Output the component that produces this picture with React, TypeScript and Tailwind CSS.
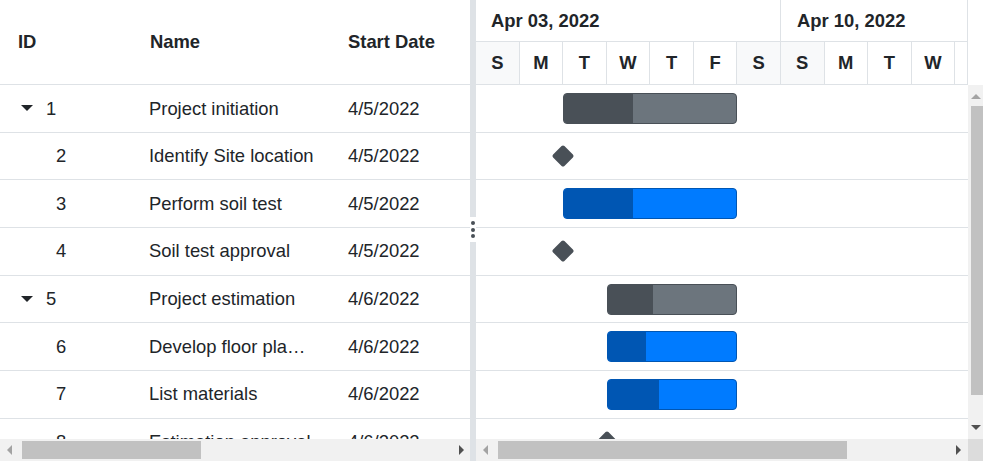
import type { ReactNode } from "react";

type Task = {
  id: number;
  name: string;
  start: string;
  parent?: boolean;
  kind: "parent" | "task" | "milestone";
  from: number;
  span?: number;
  progress?: number;
};

const DAY = 43.57;

const tasks: Task[] = [
  { id: 1, name: "Project initiation", start: "4/5/2022", parent: true, kind: "parent", from: 2, span: 4, progress: 40 },
  { id: 2, name: "Identify Site location", start: "4/5/2022", kind: "milestone", from: 2 },
  { id: 3, name: "Perform soil test", start: "4/5/2022", kind: "task", from: 2, span: 4, progress: 40 },
  { id: 4, name: "Soil test approval", start: "4/5/2022", kind: "milestone", from: 2 },
  { id: 5, name: "Project estimation", start: "4/6/2022", parent: true, kind: "parent", from: 3, span: 3, progress: 35 },
  { id: 6, name: "Develop floor plan for estimation", start: "4/6/2022", kind: "task", from: 3, span: 3, progress: 30 },
  { id: 7, name: "List materials", start: "4/6/2022", kind: "task", from: 3, span: 3, progress: 40 },
  { id: 8, name: "Estimation approval", start: "4/6/2022", kind: "milestone", from: 3 },
];

const days = ["S", "M", "T", "W", "T", "F", "S", "S", "M", "T", "W", "T"];

function ExpandArrow() {
  return <span className="inline-block h-0 w-0 border-x-[6.5px] border-t-[6px] border-x-transparent border-t-[#212529]" />;
}

function TaskBar({ task }: { task: Task }) {
  if (task.kind === "milestone") {
    return (
      <div
        className="absolute top-1/2 h-[16px] w-[16px] -translate-x-1/2 -translate-y-1/2 rotate-45 rounded-[2px] bg-[#495057]"
        style={{ left: task.from * DAY }}
      />
    );
  }

  const isParent = task.kind === "parent";
  const width = (task.span ?? 1) * DAY;

  return (
    <div
      className={`absolute top-[8px] flex h-[31px] overflow-hidden rounded-[4px] border ${
        isParent ? "border-[#495057] bg-[#6c757d]" : "border-[#0056b3] bg-[#007bff]"
      }`}
      style={{ left: task.from * DAY, width }}
    >
      <div
        className={isParent ? "h-full bg-[#495057]" : "h-full bg-[#0056b3]"}
        style={{ width: `${task.progress ?? 0}%` }}
      />
    </div>
  );
}

function HScrollbar({ thumbLeft, thumbWidth, children }: { thumbLeft: number; thumbWidth: number; children?: ReactNode }) {
  return (
    <div className="relative h-[22px] shrink-0 bg-[#f1f1f1]">
      <span className="absolute left-[7px] top-[6px] h-0 w-0 border-y-[5px] border-r-[5px] border-y-transparent border-r-[#a3a3a3]" />
      <div className="absolute top-[2px] h-[18px] bg-[#c1c1c1]" style={{ left: thumbLeft, width: thumbWidth }} />
      {children}
    </div>
  );
}

export default function App() {
  return (
    <div className="flex h-[461px] w-[983px] overflow-hidden bg-white font-['Liberation_Sans',Arial,sans-serif] text-[18.4px] text-[#212529]">
      {/* grid pane */}
      <div className="flex w-[470px] shrink-0 flex-col overflow-hidden">
        <div className="flex h-[85px] shrink-0 items-center border-b border-[#dee2e6] font-bold">
          <div className="w-[132px] shrink-0 pl-[18px]">ID</div>
          <div className="w-[198px] shrink-0 pl-[18px]">Name</div>
          <div className="w-[160px] shrink-0 pl-[18px]">Start Date</div>
        </div>
        <div className="h-[354px] shrink-0 overflow-hidden">
          {tasks.map((task) => (
            <div key={task.id} className="flex h-[47.67px] items-center border-b border-[#dee2e6]">
              <div className="flex w-[132px] shrink-0 items-center">
                {task.parent ? (
                  <div className="flex items-center pl-[21px]">
                    <ExpandArrow />
                    <span className="ml-[13px]">{task.id}</span>
                  </div>
                ) : (
                  <span className="pl-[56px]">{task.id}</span>
                )}
              </div>
              <div className="w-[198px] shrink-0 truncate pl-[17px] pr-[15px]">{task.name}</div>
              <div className="w-[160px] shrink-0 pl-[18px]">{task.start}</div>
            </div>
          ))}
        </div>
        <HScrollbar thumbLeft={22} thumbWidth={179}>
          <span className="absolute left-[459px] top-[6px] h-0 w-0 border-y-[5px] border-l-[5px] border-y-transparent border-l-[#505050]" />
        </HScrollbar>
      </div>

      {/* splitter */}
      <div className="flex w-[6px] shrink-0 flex-col">
        <div className="h-[217px] bg-[#dee2e6]" />
        <div className="flex h-[25px] flex-col items-center justify-center gap-[2.5px] bg-white">
          <span className="h-[4px] w-[4px] rounded-full bg-[#495057]" />
          <span className="h-[4px] w-[4px] rounded-full bg-[#495057]" />
          <span className="h-[4px] w-[4px] rounded-full bg-[#495057]" />
        </div>
        <div className="flex-1 bg-[#dee2e6]" />
      </div>

      {/* chart pane */}
      <div className="flex min-w-0 flex-1 flex-col">
        <div className="h-[85px] w-[492px] shrink-0 overflow-hidden border-r border-[#dee2e6] font-bold">
          <div className="flex h-[42px] border-b border-[#dee2e6]">
            <div className="flex w-[305px] shrink-0 items-center border-r border-[#dee2e6] pl-[15px]">Apr 03, 2022</div>
            <div className="flex w-[305px] shrink-0 items-center pl-[16px]">Apr 10, 2022</div>
          </div>
          <div className="flex h-[43px] border-b border-[#dee2e6]">
            {days.map((d, i) => {
              const weekend = i === 0 || i === 6 || i === 7 || i === 13;
              return (
                <div
                  key={i}
                  className={`flex h-full w-[43.57px] shrink-0 items-center justify-center border-r border-[#dee2e6] ${
                    weekend ? "bg-[#f8f9fa]" : "bg-white"
                  }`}
                >
                  {d}
                </div>
              );
            })}
          </div>
        </div>

        <div className="flex h-[354px] shrink-0">
          <div className="w-[492px] shrink-0 overflow-hidden">
            {tasks.map((task) => (
              <div key={task.id} className="relative h-[47.67px] border-b border-[#dee2e6]">
                <TaskBar task={task} />
              </div>
            ))}
          </div>
          <div className="relative flex-1 bg-[#f1f1f1]">
            <span className="absolute left-[3px] top-[9px] h-0 w-0 border-x-[5px] border-b-[5px] border-x-transparent border-b-[#a3a3a3]" />
            <div className="absolute left-[3px] right-0 top-[21px] h-[289px] bg-[#c1c1c1]" />
            <span className="absolute left-[3px] top-[340px] h-0 w-0 border-x-[5px] border-t-[5px] border-x-transparent border-t-[#505050]" />
          </div>
        </div>

        <div className="flex h-[22px] shrink-0">
          <div className="w-[492px] shrink-0">
            <HScrollbar thumbLeft={22} thumbWidth={349}>
              <span className="absolute left-[480px] top-[6px] h-0 w-0 border-y-[5px] border-l-[5px] border-y-transparent border-l-[#505050]" />
            </HScrollbar>
          </div>
          <div className="flex-1 bg-[#dcdcdc]" />
        </div>
      </div>
    </div>
  );
}
